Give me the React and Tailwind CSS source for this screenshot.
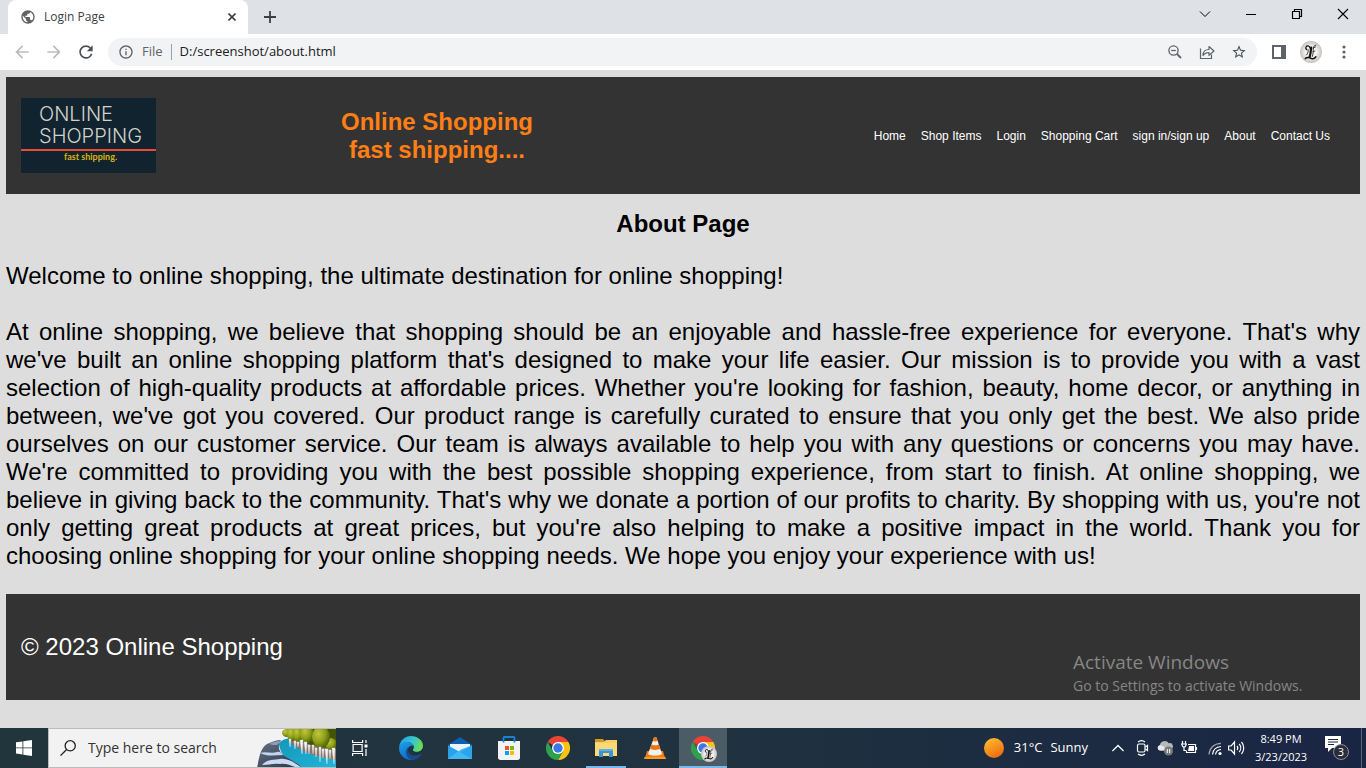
import React from "react";
import { MdPublic, MdArrowBack, MdArrowForward, MdRefresh, MdInfoOutline, MdStarBorder } from "react-icons/md";

const navItems = ["Home", "Shop Items", "Login", "Shopping Cart", "sign in/sign up", "About", "Contact Us"];

function Avatar({ className }) {
  return (
    <svg className={className} viewBox="0 0 22 22" aria-hidden="true">
      <defs>
        <radialGradient id="avatarGlow">
          <stop offset="0.5" stopColor="#f4f3f2" />
          <stop offset="1" stopColor="#c3c1c0" />
        </radialGradient>
      </defs>
      <circle cx="11" cy="11" r="11" fill="url(#avatarGlow)" />
      <g fill="none" stroke="#141010" strokeLinecap="round">
        <path d="M6.500 8.500C4.800 6.500 6.500 4.300 8.500 5c1 .4 1.500 1.200 1.600 2.200" strokeWidth="1.300" />
        <path d="M11.200 6.500c-.6 3-.2 6-1.600 9.500" strokeWidth="2.200" />
        <path d="M15.800 4.200c-1.500.4-2.400 1.200-2.500 2.800-.2 3 .1 5.500-1 8.500M8 8.500c.5 2.500-.2 4-1.500 5.500" strokeWidth=".8" />
        <path d="M13.200 7.200 15.500 6M13 10.800l2-.8" strokeWidth=".7" />
        <path d="M5.300 17.600c2-2.200 4-1.200 5.800-.3 1.800.9 3.400.5 4.800-1.500" strokeWidth="1.500" />
      </g>
    </svg>
  );
}

function ChromeLogo({ className }) {
  return (
    <svg className={className} viewBox="0 0 24 24" aria-hidden="true">
      <path d="M12 12 1.600 6A12 12 0 0 1 22.400 6Z" fill="#ea4335" />
      <path d="M12 12V6h10.400A12 12 0 0 1 12 24l5.200-9Z" fill="#fbc116" />
      <path d="M12 12 6.800 15 1.600 6A12 12 0 0 0 12 24l5.200-9Z" fill="#2da14c" />
      <circle cx="12" cy="12" r="6" fill="#fff" />
      <circle cx="12" cy="12" r="4.700" fill="#3b78e7" />
    </svg>
  );
}

function EdgeLogo() {
  return (
    <svg className="size-6" viewBox="0 0 24 24" aria-hidden="true">
      <defs>
        <linearGradient id="edgeTop" x1="0" y1="0.3" x2="1" y2="0.6">
          <stop offset="0" stopColor="#2a9de6" />
          <stop offset="0.5" stopColor="#33c5d2" />
          <stop offset="1" stopColor="#6ee04c" />
        </linearGradient>
        <linearGradient id="edgeBody" x1="0" y1="0" x2="0.6" y2="1">
          <stop offset="0" stopColor="#1da1eb" />
          <stop offset="1" stopColor="#0f62bd" />
        </linearGradient>
      </defs>
      <path d="M.2 10.800C1 4.400 6 0 12 0c6.500 0 12 4.500 12 9.800 0 3.800-2.800 6-6 6-2.400 0-4.100-.8-4.100-1.900 0-.8 1-1 1-2.900C14.900 8.300 12 6.200 8.200 6.200c-3.700 0-6.500 1.800-8 4.600Z" fill="url(#edgeTop)" />
      <path d="M.1 11.500C.8 8 4 6 7.900 6c3.500 0 6.300 1.500 6.900 4.200-2.500-1.200-5.200 0-5.900 2.600-1 3.900 2.500 7.200 6.700 7.200 2.700 0 5-.8 7-2.200C20.600 21.600 16.700 24 12 24 5.200 24-.6 18.300.1 11.500Z" fill="url(#edgeBody)" />
      <path d="M9.100 11.300c-2.600 2.300-3 6.500-.5 9.500 1.100 1.400 2.700 2.500 4.700 3.100 4-.4 7.600-2.900 9.500-6.100-2 1.300-4.300 2-7 2-4.300 0-7.800-3.500-6.700-8.500Z" fill="#164b91" />
    </svg>
  );
}

function MailLogo() {
  return (
    <svg className="size-6" viewBox="0 0 24 24" aria-hidden="true">
      <path d="M0 9 12 1l12 8v4H0Z" fill="#105eaf" />
      <path d="M2 8h20v7l-10 4L2 15Z" fill="#e9f3fc" />
      <path d="M0 9.500 12 16 24 9.500V23H0Z" fill="#2aa2e9" />
      <path d="m0 23 13-9.500L24 9.500V23Z" fill="#41b9f5" />
      <path d="m12 16 12 7V9.500Z" fill="#29a4ed" />
    </svg>
  );
}

function StoreLogo() {
  return (
    <svg className="size-6" viewBox="0 0 24 24" aria-hidden="true">
      <path d="M1 5h22v16.500c0 1.500-.8 2.500-2.500 2.500h-17C1.800 24 1 23 1 21.500Z" fill="#f2f2f2" />
      <path d="M6.500 6.500V1.800c0-.6.3-.8.8-.8h9.400c.5 0 .8.200.8.800v4.700" fill="none" stroke="#1686d0" strokeWidth="1.800" />
      <path d="M8 10h4v4H8z" fill="#f25022" />
      <path d="M13 10h4v4h-4z" fill="#7fba00" />
      <path d="M8 15h4v4H8z" fill="#00a4ef" />
      <path d="M13 15h4v4h-4z" fill="#ffb900" />
    </svg>
  );
}

function FolderLogo() {
  return (
    <svg className="size-6" viewBox="0 0 24 24" aria-hidden="true">
      <path d="M1 3h8l2 2.500H1Z" fill="#d99a12" />
      <path d="M1 5.500h9L12 4h11v16H1Z" fill="#f9cf61" />
      <path d="M1 7h22v13H1Z" fill="#fbd977" />
      <path d="M5 13h14v8h-4v-4H9v4H5Z" fill="#3a92d8" />
      <path d="M5 13h14v2H5z" fill="#5eb0ea" />
    </svg>
  );
}

function VlcLogo() {
  return (
    <svg className="size-6" viewBox="0 0 24 24" aria-hidden="true">
      <path d="M4 15h16l2.300 8H1.700Z" fill="#ee7c12" />
      <path d="M1.500 21h21l.5 2H1Z" fill="#f89b22" />
      <path d="M11 1.500h2.500L19 18c-2 2.300-12 2.300-14 0Z" fill="#f3f1ee" />
      <path d="M11 1.500h2.500l1.100 3.500c-1 .5-3.700.5-4.800 0ZM8.500 8.500c1.500.9 5.700.9 7.300 0l1.500 4.300c-2 1.500-8.200 1.500-10.300 0Z" fill="#ee7410" />
    </svg>
  );
}

function Landscape() {
  return (
    <svg className="h-10 w-20 shrink-0" viewBox="0 0 80 40" preserveAspectRatio="none" aria-hidden="true">
      <defs>
        <linearGradient id="river" x1="0" y1="0" x2="1" y2="1">
          <stop offset="0" stopColor="#1596b9" />
          <stop offset="1" stopColor="#20b5d7" />
        </linearGradient>
        <linearGradient id="rock" x1="0" y1="0" x2="1" y2="1">
          <stop offset="0" stopColor="#66748a" />
          <stop offset="1" stopColor="#29343f" />
        </linearGradient>
        <radialGradient id="tree" cx="0.35" cy="0.35" r="0.650">
          <stop offset="0" stopColor="#c3c440" />
          <stop offset="0.600" stopColor="#8ea016" />
          <stop offset="1" stopColor="#566b08" />
        </radialGradient>
      </defs>
      <path d="M34 0h46v26L44 14Z" fill="#435408" />
      <path d="M23 16c1-3 5-5 11-6l46 17v13H42C32 34 24 26 23 16Z" fill="url(#river)" />
      <path d="M32 9c12 6 30 10 48 12v11C61 29 44 24 33 13Z" fill="#8f7260" />
      <path d="M1 40c2-9 3-20 10-24 5-2 9-4 14-4-3 5-3 9 1 14 6 5 15 8 20 14Z" fill="url(#rock)" />
      <path d="M4 25c6-2 11 1 17-1 2-1 4 0 6 3-8 0-15 2-23-2Z" fill="#c3d3f0" />
      <path d="M6 37c5-6 12-5 18-6 8-1 15 4 22 9-9 0-13-5-22-4-7-1-11 1-18 1Z" fill="#cbd9f6" />
      <path d="M13 16c4-2 8-3 12-3l-4 4c-3 0-5 0-8-1Z" fill="#8f9db8" />
      <g fill="url(#tree)">
        <ellipse cx="31" cy="5" rx="5" ry="4" />
        <ellipse cx="36" cy="6" rx="5" ry="7" />
        <ellipse cx="75" cy="16" rx="6" ry="6" />
        <ellipse cx="42" cy="6" rx="5" ry="8" />
        <ellipse cx="51" cy="6" rx="7" ry="9" />
        <ellipse cx="65" cy="9" rx="9" ry="11" />
      </g>
      <path d="M33 11h2l-1 8zM38 13h2l-1 8zM41 14h2l-1 5zM44 12h3l-1 14zM48 14h3l-1 12zM52 17h2l-1 9zM56 17h2l-1 9zM59 20h2l-1 9zM63 19h2l-1 15zM66 21h2l-1 9zM69 21h3l-1 15zM73 22h2l-1 9zM76 20h3l-1 16z" fill="#f1f5fd" stroke="#dfe8f8" strokeWidth=".4" />
    </svg>
  );
}

function BrowserChrome() {
  return (
    <header className="font-['Open_Sans',sans-serif] text-[#3c4043]">
      <div className="flex h-[34px] items-center bg-[#dee1e6]">
        <div className="ml-2 flex h-full w-60 items-center rounded-t-lg bg-white pr-2 pl-3">
          <MdPublic className="size-4 text-[#5f6368]" aria-hidden="true" />
          <span className="ml-2 flex-1 text-xs">Login Page</span>
          <button aria-label="Close tab" className="grid size-4 place-items-center">
            <svg className="size-2" viewBox="0 0 8 8"><path d="m.5.5 7 7m0-7-7 7" stroke="#3c4043" strokeWidth="1.600" /></svg>
          </button>
        </div>
        <button aria-label="New tab" className="ml-4 grid size-3 place-items-center">
          <svg className="size-3" viewBox="0 0 12 12"><path d="M6 0v12M0 6h12" stroke="#3c4043" strokeWidth="1.800" /></svg>
        </button>
        <div className="mb-1.5 ml-auto flex text-black">
          <button aria-label="Search tabs" className="grid w-[46px] place-items-center">
            <svg className="size-3" viewBox="0 0 12 12"><path d="m1 3.500 5 5 5-5" fill="none" stroke="currentColor" /></svg>
          </button>
          <button aria-label="Minimize" className="grid w-[46px] place-items-center">
            <svg className="size-3" viewBox="0 0 12 12"><path d="M1 6.500h10" stroke="currentColor" /></svg>
          </button>
          <button aria-label="Restore" className="grid w-[46px] place-items-center">
            <svg className="size-3" viewBox="0 0 12 12"><path d="M1.500 3.500h7v7h-7zM3.500 3.500v-2h7v7h-2" fill="none" stroke="currentColor" strokeWidth="1.200" /></svg>
          </button>
          <button aria-label="Close window" className="grid w-[46px] place-items-center">
            <svg className="size-3" viewBox="0 0 12 12"><path d="m1 1 10 10m0-10L1 11" stroke="currentColor" strokeWidth="1.100" /></svg>
          </button>
        </div>
      </div>
      <div className="flex h-9 items-center bg-white pr-3.5 pl-3">
        <button aria-label="Back"><MdArrowBack className="size-5 text-[#babcbe]" /></button>
        <button aria-label="Forward" className="ml-3"><MdArrowForward className="size-5 text-[#babcbe]" /></button>
        <button aria-label="Reload" className="ml-3"><MdRefresh className="size-5 text-[#4b4f53]" /></button>
        <div className="ml-3 flex h-7 flex-1 items-center rounded-full bg-[#f1f3f4] px-2.5">
          <MdInfoOutline className="size-4 text-[#5f6368]" aria-hidden="true" />
          <label htmlFor="address" className="ml-2 text-[13px] text-[#5f6368]">File</label>
          <span className="mx-2 h-4 w-px bg-[#9aa0a6]" />
          <input id="address" type="text" defaultValue="D:/screenshot/about.html" className="flex-1 bg-transparent text-[13px] text-[#202124] outline-none" />
          <button aria-label="Zoom out" className="mr-4">
            <svg className="size-4" viewBox="0 0 16 16" fill="none" stroke="#5f6368" strokeWidth="1.300"><circle cx="6.500" cy="6.500" r="4.600" /><path d="M4.200 6.500h4.600" /><path d="m10 10 4 4" strokeWidth="1.800" /></svg>
          </button>
          <button aria-label="Share" className="mr-4">
            <svg className="size-4" viewBox="0 0 16 16" fill="none" stroke="#5f6368" strokeWidth="1.200"><path d="M1.500 4.500v10h11v-4" /><path d="M4 11.500C4 7.500 6.500 5.500 10 5.500v-3L15 7l-5 4.300V8.500C7.500 8.500 5.500 9.300 4 11.500Z" strokeLinejoin="round" /></svg>
          </button>
          <button aria-label="Bookmark">
            <MdStarBorder className="size-4 text-[#4b4f53]" />
          </button>
        </div>
        <button aria-label="Side panel" className="ml-[15px]">
          <svg className="size-3.5" viewBox="0 0 14 14"><path d="M0 0h14v14H0z" fill="#5f6368" /><path d="M2 2h7v10H2z" fill="#fff" /></svg>
        </button>
        <button aria-label="Profile" className="ml-3.5"><Avatar className="size-[22px]" /></button>
        <button aria-label="Menu" className="ml-3.5">
          <svg className="size-4" viewBox="0 0 16 16" fill="#5f6368"><circle cx="8" cy="3" r="1.600" /><circle cx="8" cy="8" r="1.600" /><circle cx="8" cy="13" r="1.600" /></svg>
        </button>
      </div>
    </header>
  );
}

function ShopLogo() {
  return (
    <div className="h-[75px] w-[135px] shrink-0 bg-[#11232e] pt-[5px] font-[Inter,sans-serif] font-light text-[#d0d3cc]">
      <div className="pl-[18px] text-xl leading-[22px]">
        <div>ONLINE</div>
        <div>SHOPPING</div>
      </div>
      <div className="mt-0.5 h-0.5 bg-[#e94b33]" />
      <div className="pl-1 text-center font-[Lato,sans-serif] text-[9px] leading-[11px] font-bold text-[#d9b310]">fast shipping.</div>
    </div>
  );
}

function Page() {
  return (
    <main className="relative flex-1 bg-[#dddddd] px-1.5 pt-[7px] pb-7 font-['Liberation_Sans',Arial,sans-serif] text-2xl leading-7 text-black">
      <div className="flex h-[117px] items-center bg-[#333333] px-[15px]">
        <ShopLogo />
        <h1 className="flex-[562] text-center font-bold text-[#ff7f16]">Online Shopping<br />fast shipping....</h1>
        <nav className="flex-[627]">
          <ul className="flex justify-end gap-[15px] pr-[15px] text-xs whitespace-nowrap text-white">
            {navItems.map((item) => (
              <li key={item}><a href="#">{item}</a></li>
            ))}
          </ul>
        </nav>
      </div>
      <h2 className="mt-4 text-center font-bold">About Page</h2>
      <div className="mt-6 space-y-7 text-justify">
        <p>Welcome to online shopping, the ultimate destination for online shopping!</p>
        <p>At online shopping, we believe that shopping should be an enjoyable and hassle-free experience for everyone. That's why we've built an online shopping platform that's designed to make your life easier. Our mission is to provide you with a vast selection of high-quality products at affordable prices. Whether you're looking for fashion, beauty, home decor, or anything in between, we've got you covered. Our product range is carefully curated to ensure that you only get the best. We also pride ourselves on our customer service. Our team is always available to help you with any questions or concerns you may have. We're committed to providing you with the best possible shopping experience, from start to finish. At online shopping, we believe in giving back to the community. That's why we donate a portion of our profits to charity. By shopping with us, you're not only getting great products at great prices, but you're also helping to make a positive impact in the world. Thank you for choosing online shopping for your online shopping needs. We hope you enjoy your experience with us!</p>
      </div>
      <footer className="mt-6 flex h-[106px] items-center bg-[#333333] px-[15px] text-white">
        <p>© 2023 Online Shopping</p>
      </footer>
      <div className="absolute right-14 bottom-8 w-[237px] font-['Open_Sans',sans-serif] whitespace-nowrap text-[#868686]">
        <p className="text-[19px] leading-7">Activate Windows</p>
        <p className="text-sm leading-5">Go to Settings to activate Windows.</p>
      </div>
    </main>
  );
}

function TaskButton({ label, state, children }) {
  const look = state === "active" ? "w-12 border-[#76b9ed] bg-[#4c5c66]" : state === "open" ? "mx-1 w-10 border-[#76b9ed]" : "w-[49px] border-transparent";
  return (
    <button aria-label={label} className={`relative grid h-full place-items-center border-b-2 pt-px ${look}`}>
      {children}
    </button>
  );
}

function Taskbar() {
  return (
    <footer className="flex h-10 items-center bg-linear-to-r from-[#21353d] via-[#20323f] to-[#1a2544] font-['Open_Sans',sans-serif] text-white">
      <button aria-label="Start" className="grid h-full w-12 place-items-center">
        <svg className="size-4" viewBox="0 0 16 16" fill="#fff"><path d="m0 2.300 6.500-.9v6.100H0zM7.300 1.300 16 0v7.500H7.300zM0 8.300h6.500v6.200L0 13.600zM7.300 8.300H16V16l-8.700-1.300z" /></svg>
      </button>
      <div className="flex h-10 w-72 items-center overflow-hidden border-y border-l border-[#bcbcbc] bg-[#f2f2f2] pl-[11px]">
        <svg className="size-4 shrink-0" viewBox="0 0 16 16" fill="none" stroke="#222" strokeWidth="1.300"><circle cx="10.200" cy="5.800" r="5.100" /><path d="M6.600 9.500.5 15.600" /></svg>
        <input aria-label="Search" placeholder="Type here to search" className="ml-3 min-w-0 flex-1 bg-transparent text-sm outline-none placeholder:text-[#333333]" />
        <Landscape />
      </div>
      <div className="flex h-full items-center">
        <button aria-label="Task view" className="mr-0.5 grid h-full w-12 place-items-center">
          <svg className="size-4" viewBox="0 0 16 16" fill="none" stroke="#fff" strokeWidth="1.200"><path d="M.6 0v2.500h10V0M.6 16v-2.500h10V16M1.100 4.500h9v7h-9zM14 0v3M14 9v7" /><path d="M12.500 4.500h3v3h-3z" fill="#fff" stroke="none" /></svg>
        </button>
        <TaskButton label="Edge"><EdgeLogo /></TaskButton>
        <TaskButton label="Mail"><MailLogo /></TaskButton>
        <TaskButton label="Store"><StoreLogo /></TaskButton>
        <TaskButton label="Chrome"><ChromeLogo className="size-6" /></TaskButton>
        <TaskButton label="File Explorer" state="open"><FolderLogo /></TaskButton>
        <TaskButton label="VLC"><VlcLogo /></TaskButton>
        <TaskButton label="Chrome, profile window" state="active">
          <ChromeLogo className="size-6" />
          <Avatar className="absolute right-2.5 bottom-1 size-4" />
        </TaskButton>
      </div>
      <div className="ml-auto flex h-full items-center">
        <svg className="size-5" viewBox="0 0 20 20" aria-hidden="true">
          <defs><linearGradient id="sun" x1="0.200" y1="0" x2="0.700" y2="1"><stop offset="0" stopColor="#fbbd2f" /><stop offset="1" stopColor="#f2670f" /></linearGradient></defs>
          <circle cx="10" cy="10" r="10" fill="url(#sun)" />
        </svg>
        <span className="ml-2.5 text-[13px]">31°C</span>
        <span className="ml-2 text-[13px]">Sunny</span>
        <button aria-label="Show hidden icons" className="ml-6">
          <svg className="size-3" viewBox="0 0 12 12"><path d="m.4 9 5.600-5.500L11.600 9" fill="none" stroke="#fff" strokeWidth="1.300" /></svg>
        </button>
        <svg className="ml-2.5 size-4 shrink-0" viewBox="0 0 16 16" fill="none" stroke="#fff" strokeWidth="1.200" aria-hidden="true"><rect x="3.500" y="4" width="7.500" height="8" rx="1.500" /><path d="M11.500 7 13.500 5.500v5L11.500 9M4 1.900C6.300.2 8.700.2 11 1.900M4 14.100c2.300 1.700 4.700 1.700 7 0" /></svg>
        <svg className="ml-[7px] size-4 shrink-0" viewBox="0 0 16 16" aria-hidden="true"><path d="M2.800 10.500a2.700 2.700 0 0 1 0-5.300 5 5 0 0 1 9-2 3.200 3.200 0 0 1 1.700 6.300l-3 1Z" fill="#b5b9be" /><path d="M2.800 10.500A2.700 2.700 0 0 1 3 5.200c3-.6 4 3 7 3.300l-1 2Z" fill="#e6e8ea" /><circle cx="11.500" cy="11" r="4.500" fill="#77797d" /><path d="M10.300 9v4M12.700 9v4" stroke="#fff" /></svg>
        <svg className="ml-2 h-4 w-[17px] shrink-0" viewBox="0 0 17 16" fill="none" stroke="#fff" strokeWidth="1.200" aria-hidden="true"><path d="M7 4.500h7.500v8H5.500v-2M15.500 7v3M1.500 1v2.500M4.500 1v2.500M0 4h6M1 4.500c0 3.500 4 3.500 4 0M3 7v3.500h2" /><path d="M8 6h5v5H7z" fill="#fff" stroke="none" /></svg>
        <svg className="ml-2.5 size-4 shrink-0" viewBox="0 0 16 16" fill="none" stroke="#fff" strokeWidth="1.200" aria-hidden="true"><path d="M4.500 14.500C5 10 8 6.800 13 6.500M7.500 14.500c.5-3 2.300-4.700 5.500-5" /><path d="M1 14.500C1.500 8 6 3.500 13 3.300" stroke="#9ba2ae" /><circle cx="12" cy="13.500" r="1.600" fill="#fff" stroke="none" /></svg>
        <svg className="ml-1 h-4 w-[17px] shrink-0" viewBox="0 0 17 16" fill="none" stroke="#fff" strokeWidth="1.200" aria-hidden="true"><path d="M.6 6h2.500l3.400-4v12l-3.400-4H.6ZM9 6c1 1.200 1 2.800 0 4M11.200 4c2 2.300 2 5.700 0 8M13.500 2c3 3.500 3 8.500 0 12" /></svg>
        <div className="ml-2.5 w-[52px] text-center text-[11px] leading-[18px] whitespace-nowrap">
          <div>8:49 PM</div>
          <div>3/23/2023</div>
        </div>
        <button aria-label="Notifications" className="relative mr-3 ml-[18px] grid size-6 place-items-start">
          <svg className="size-4" viewBox="0 0 16 16"><path d="M0 0h16v12H7l-4 4v-4H0Z" fill="#fff" /><path d="M3 3.500h10M3 6h10M3 8.500h6" stroke="#1b2843" /></svg>
          <span className="absolute right-0 bottom-0 grid size-4 place-items-center rounded-full border border-[#8a8e96] bg-[#2b2e38] text-[11px] leading-3">3</span>
        </button>
        <span className="mr-1 h-full w-px bg-[#596379]" />
      </div>
    </footer>
  );
}

export default function App() {
  return (
    <div className="flex min-h-screen flex-col">
      <BrowserChrome />
      <Page />
      <Taskbar />
    </div>
  );
}
